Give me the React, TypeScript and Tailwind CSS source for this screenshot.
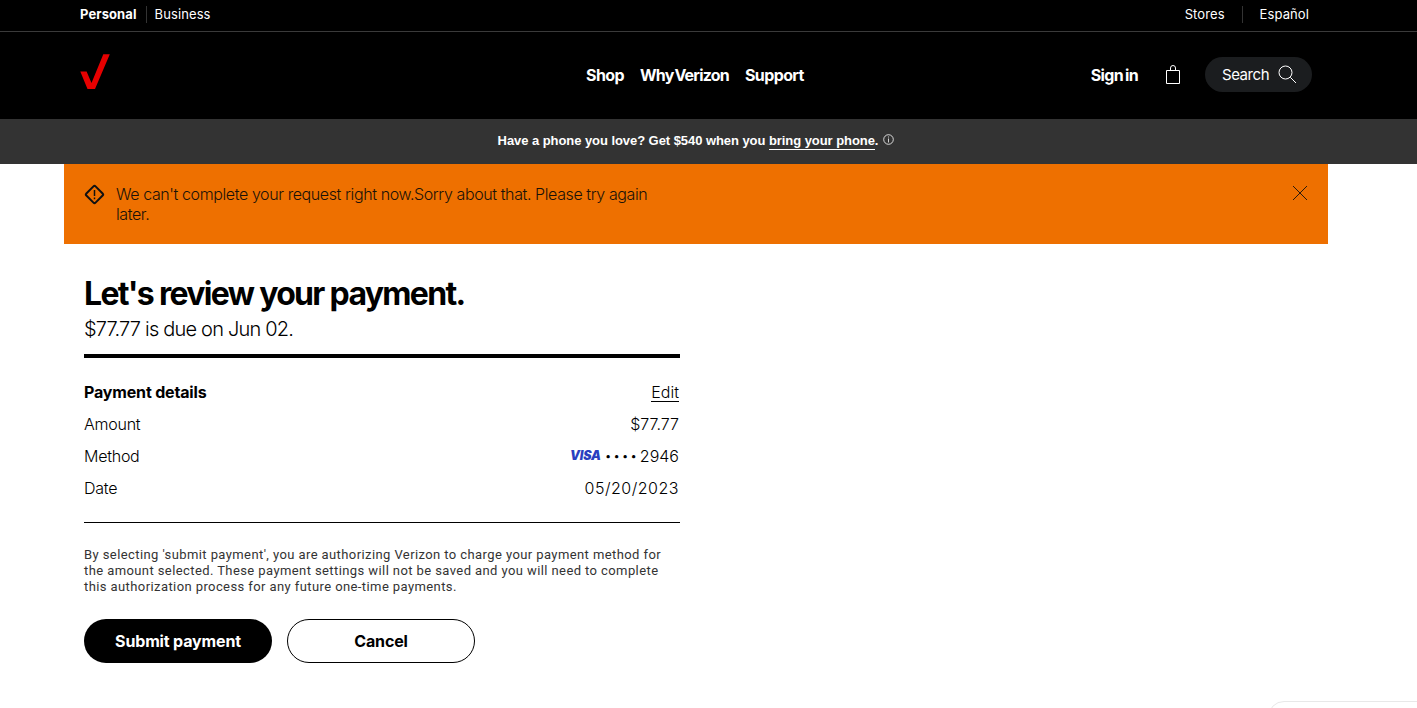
import React from "react";

function Bag() {
  return (
    <svg width="16" height="20" viewBox="0 0 16 20" fill="none" stroke="#fff" strokeWidth="1">
      <path d="M1.500 5.500h13v13h-13z" />
      <path d="M5.500 5.500V3a2.500 2.500 0 0 1 5 0v2.500" />
    </svg>
  );
}

function SearchIcon() {
  return (
    <svg width="19" height="19" viewBox="0 0 19 19" fill="none" stroke="#fff" strokeWidth="1">
      <circle cx="7.500" cy="7.500" r="6.500" />
      <path d="M12.300 12.300 L18 18" />
    </svg>
  );
}

function Row({ left, children }: { left: string; children: React.ReactNode }) {
  return (
    <div className="flex justify-between items-center h-[32px] text-[16px] text-black font-light pr-[1px]">
      <span className="tracking-[-0.25px]">{left}</span>
      <span className="flex items-center">{children}</span>
    </div>
  );
}

export default function App() {
  return (
    <div className="h-[708px] overflow-hidden bg-white relative font-['Inter',Arial,sans-serif] text-black">
      <header className="bg-black text-white">
        <div className="h-[32px] pb-[2px] border-b border-[#3a3a3a] flex items-center justify-between pl-[80px] pr-[108px] text-[13px] tracking-[0.1px]">
          <div className="flex items-center">
            <span className="font-bold pr-[9px] border-r border-[#333] leading-[17px]">Personal</span>
            <span className="pl-[8px] leading-[17px]">Business</span>
          </div>
          <div className="flex items-center">
            <span className="pr-[17px] border-r border-[#333] leading-[17px]">Stores</span>
            <span className="pl-[17px] leading-[17px]">Español</span>
          </div>
        </div>
        <div className="h-[87px] relative flex items-center justify-between pl-[80px] pr-[105px]">
          <svg width="30" height="36" viewBox="0 0 30 36" className="mb-[8px]">
            <path d="M0.300 17.500 H6.600 L11.500 29 L23.300 0.300 H29.800 L15 35 H7.500 Z" fill="#e60000" />
          </svg>
          <nav className="flex items-center gap-[16px] absolute left-[586px] top-[33px] font-bold text-[16px] tracking-[-0.6px] leading-[20px]">
            <span>Shop</span>
            <span className="[word-spacing:-2px] tracking-[-0.8px]">Why Verizon</span>
            <span>Support</span>
          </nav>
          <div className="flex items-center">
            <span className="font-bold text-[16px] tracking-[-0.6px] [word-spacing:-1.500px] mr-[27px] mb-[1px]">Sign in</span>
            <span className="mr-[24px] flex mb-[2px]"><Bag /></span>
            <div className="w-[107px] h-[35px] rounded-full bg-[#1b1d1f] flex items-center pl-[17px] gap-[9px] text-[15px] tracking-[-0.45px] mb-[2px]">
              <span className="pt-[1px]">Search</span>
              <SearchIcon />
            </div>
          </div>
        </div>
      </header>
      <div className="h-[45px] pb-[2px] pr-[25px] bg-[#333333] text-white flex items-center justify-center font-['Liberation_Sans',sans-serif] font-bold text-[13px] tracking-[-0.06px]">
        <span>
          Have a phone you love? Get $540 when you <span className="border-b border-white pb-[1px]">bring your phone</span>.
        </span>
        <svg className="ml-[5px] mb-[2px]" width="11" height="11" viewBox="0 0 11 11" fill="none" stroke="#fff" strokeWidth="0.8">
          <circle cx="5.500" cy="5.500" r="4.800" />
          <path d="M5.500 4.500v4M5.500 2.500v1" />
        </svg>
      </div>
      <div className="mx-[64px] w-[1264px] h-[80px] bg-[#ee7000] flex items-start relative pt-[20px] pl-[20px]">
        <svg width="21" height="21" viewBox="0 0 21 21" fill="none" stroke="#111" strokeWidth="2" className="mr-[11px]">
          <rect x="4" y="4" width="13" height="13" rx="1.500" transform="rotate(45 10.500 10.500)" />
          <path d="M10.500 6v6M10.500 13.500v1.800" strokeWidth="1.500" />
        </svg>
        <p className="w-[550px] text-[16px] leading-[20px] text-[#1a1208] font-light tracking-[-0.4px]">
          We can't complete your request right now.Sorry about that. Please try again later.
        </p>
        <svg className="absolute left-[1228px] top-[21px]" width="16" height="16" viewBox="0 0 16 16" fill="none" stroke="#111" strokeWidth="0.900">
          <path d="M1 1l14 14M15 1L1 15" />
        </svg>
      </div>
      <main className="ml-[84px] w-[596px] pt-[31px]">
        <h1 className="font-bold text-[32px] leading-[38px] tracking-[-1.68px]">Let's review your payment.</h1>
        <p className="text-[20px] leading-[24px] mt-[4px] tracking-[-0.8px] font-light">$77.77 is due on Jun 02.</p>
        <div className="h-[4px] bg-black mt-[13px]" />
        <div className="pt-[18px] pb-[18px] border-b border-black">
          <div className="flex justify-between items-center h-[32px] text-[16px] pr-[1px]">
            <span className="font-bold tracking-[-0.17px]">Payment details</span>
            <span className="border-b border-black leading-[17px] font-light mt-[2px]">Edit</span>
          </div>
          <Row left="Amount"><span>$77.77</span></Row>
          <Row left="Method">
            <span className="font-black italic text-[12.500px] text-[#2a3fc0] tracking-[-0.2px] mr-[4px] pt-[1px]">VISA</span>
            <span className="tracking-[1.800px] text-[12px] mr-[1px]">••••</span>
            <span>2946</span>
          </Row>
          <Row left="Date"><span className="tracking-[0.5px]">05/20/2023</span></Row>
        </div>
        <p className="font-['Roboto',sans-serif] text-[13px] leading-[16px] mt-[24px] text-[#333] tracking-[0.41px]">
          By selecting 'submit payment', you are authorizing Verizon to charge your payment method for the amount selected. These payment settings will not be saved and you will need to complete this authorization process for any future one-time payments.
        </p>
        <div className="flex gap-[15px] mt-[24px] font-bold text-[16px]">
          <button className="w-[188px] h-[44px] rounded-full bg-black text-white tracking-[-0.15px]">Submit payment</button>
          <button className="w-[188px] h-[44px] rounded-full border border-black bg-white text-black tracking-[-0.15px]">Cancel</button>
        </div>
      </main>
      <div className="absolute left-[1268px] top-[701px] w-[200px] h-[40px] rounded-[16px] border border-[#e8e8e8]" />
    </div>
  );
}
